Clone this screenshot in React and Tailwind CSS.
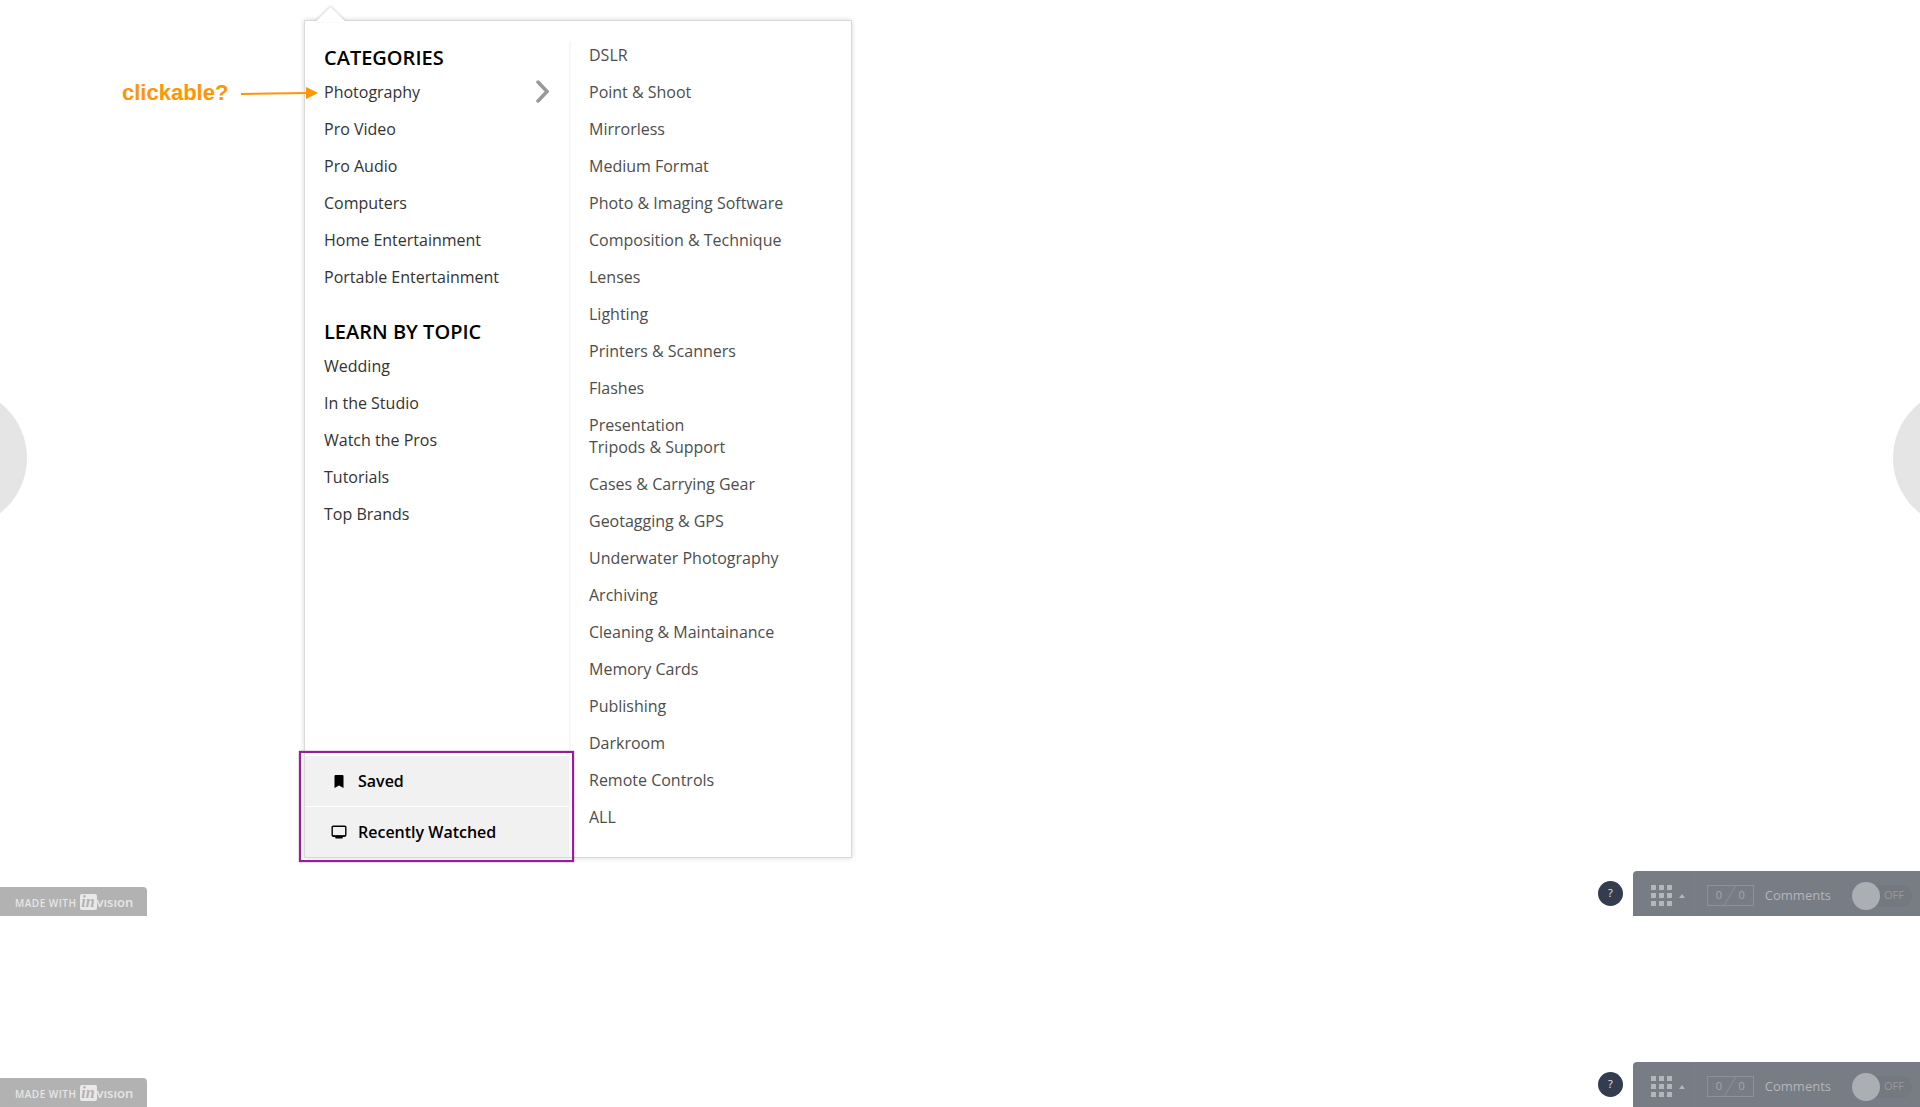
import { Fragment } from "react";

const categories = [
  "Photography",
  "Pro Video",
  "Pro Audio",
  "Computers",
  "Home Entertainment",
  "Portable Entertainment",
];

const topics = [
  "Wedding",
  "In the Studio",
  "Watch the Pros",
  "Tutorials",
  "Top Brands",
];

// Each entry is one group; names in the same group are stacked without a gap.
const subcategories = [
  ["DSLR"],
  ["Point & Shoot"],
  ["Mirrorless"],
  ["Medium Format"],
  ["Photo & Imaging Software"],
  ["Composition & Technique"],
  ["Lenses"],
  ["Lighting"],
  ["Printers & Scanners"],
  ["Flashes"],
  ["Presentation", "Tripods & Support"],
  ["Cases & Carrying Gear"],
  ["Geotagging & GPS"],
  ["Underwater Photography"],
  ["Archiving"],
  ["Cleaning & Maintainance"],
  ["Memory Cards"],
  ["Publishing"],
  ["Darkroom"],
  ["Remote Controls"],
  ["ALL"],
];

const GRID_STEPS = [0, 8, 16];

function BookmarkIcon() {
  return (
    <svg width="16" height="16" viewBox="0 0 16 16" aria-hidden="true">
      <path d="M3.5 3a1 1 0 0 1 1-1h7a1 1 0 0 1 1 1v12L8 12.6 3.5 15z" fill="#000" />
    </svg>
  );
}

function ScreenIcon() {
  return (
    <svg width="16" height="16" viewBox="0 0 16 16" aria-hidden="true">
      <rect x="1.2" y="2.2" width="13.6" height="9.8" rx="1" fill="none" stroke="#000" strokeWidth="1.4" />
      <path d="M1.5 11.4h13v.8l-1.500.8H12l-.6 1.600H4.600L4 13H3l-1.500-.8z" fill="#000" />
    </svg>
  );
}

function MenuGroup({ title, items, activeItem }) {
  return (
    <section className="flex flex-col gap-[9px]">
      <h2 className="text-xl leading-7 font-semibold text-black">{title}</h2>
      <ul className="flex flex-col gap-[15px]">
        {items.map((item) => (
          <li key={item} className="flex h-[22px] items-center justify-between">
            <a href="#" className="text-[#333]">
              {item}
            </a>
            {item === activeItem && (
              <svg width="14" height="24" viewBox="0 0 14 24" fill="none" aria-hidden="true">
                <path
                  d="M3 2 12 11.500 3 21"
                  stroke="#999"
                  strokeWidth="3.500"
                  strokeLinecap="round"
                />
              </svg>
            )}
          </li>
        ))}
      </ul>
    </section>
  );
}

function ClickableNote() {
  return (
    <div className="absolute top-14 -left-[183px] flex items-center gap-[13px]">
      <span className="font-['Liberation_Sans',Arial,sans-serif] text-[22px] leading-8 font-bold text-[#ff9500]">
        clickable?
      </span>
      <svg width="77" height="14" viewBox="0 0 77 14" aria-hidden="true">
        <path d="M0 8 66 7" stroke="#ff9500" strokeWidth="2" />
        <path d="M65 1 77 7 65 13z" fill="#ff9500" />
      </svg>
    </div>
  );
}

function CategoryMenu() {
  return (
    <nav
      aria-label="Categories"
      className="relative flex w-[548px] border border-[#d9d9d9] bg-white text-base leading-[22px] shadow-[0_0_5px_rgba(0,0,0,0.16)]"
    >
      {/* pointer towards the menu button */}
      <svg
        className="absolute -top-[17px] left-[8px] drop-shadow-[0_-1px_1px_rgba(0,0,0,0.18)]"
        width="36"
        height="18"
        viewBox="0 0 36 18"
        aria-hidden="true"
      >
        <path d="M2 18 17.500 3 33 18z" fill="#fff" />
      </svg>

      <div className="flex w-[264px] flex-col justify-between pt-[23px]">
        <div className="flex flex-col gap-[30px] pr-5 pl-[19px]">
          <MenuGroup title="CATEGORIES" items={categories} activeItem="Photography" />
          <MenuGroup title="LEARN BY TOPIC" items={topics} />
        </div>

        <div className="relative flex flex-col gap-px">
          <a href="#" className="flex h-[50px] items-center gap-[11px] bg-[#f1f1f1] pl-[26px] font-semibold text-black">
            <BookmarkIcon />
            Saved
          </a>
          <a href="#" className="flex h-[50px] items-center gap-[11px] bg-[#f1f1f1] pl-[26px] font-semibold text-black">
            <ScreenIcon />
            Recently Watched
          </a>
          <div className="pointer-events-none absolute -top-[5px] -right-[5px] -bottom-[5px] -left-[6px] border-2 border-[#951f95] shadow-[0_0_1px_#951f95]" />
        </div>
      </div>

      <div className="mt-5 w-[2px] bg-[#f7f7f7]" />

      <ul className="flex flex-1 flex-col gap-[15px] pt-[23px] pb-[29px] pl-[18px]">
        {subcategories.map((group) => (
          <li key={group[0]} className="flex flex-col items-start">
            {group.map((name) => (
              <a key={name} href="#" className="text-[#4d4d4d]">
                {name}
              </a>
            ))}
          </li>
        ))}
      </ul>

      <ClickableNote />
    </nav>
  );
}

function InVisionBadge() {
  return (
    <a
      href="#"
      className="flex h-[29px] items-center gap-[3px] rounded-tr bg-[#b2b2b2] pr-[14px] pl-[15px] text-[#e6e6e6]"
    >
      <span className="pt-[3px] text-[10px] font-semibold tracking-wider">MADE WITH</span>
      <span className="flex items-center pt-px">
        <span className="flex h-4 w-[17px] items-center justify-center rounded-[2px] bg-[#e9e9e9] pb-px font-['Liberation_Serif',serif] text-base leading-4 font-bold text-[#b2b2b2] italic">
          in
        </span>
        <span className="text-[13px] leading-4 font-semibold">vısıon</span>
      </span>
    </a>
  );
}

function CommentsBar({ id }) {
  return (
    <div className="flex gap-[10px]">
      <button
        type="button"
        aria-label="Help"
        className="mt-[10px] flex size-[25px] items-center justify-center rounded-full bg-[#343c4f] text-[11px] text-[#e8e9ec]"
      >
        ?
      </button>

      <div className="flex h-[45px] items-center rounded-tl bg-[#787c84] pr-2">
        <button
          type="button"
          aria-label="Screens"
          className="flex h-full items-center gap-[7px] border-r border-[#7b7f87] pt-[4px] pr-[9px] pl-[18px]"
        >
          <svg width="21" height="21" viewBox="0 0 21 21" fill="#b3b6bb" aria-hidden="true">
            {GRID_STEPS.map((y) => (
              <Fragment key={y}>
                {GRID_STEPS.map((x) => (
                  <rect key={x} x={x} y={y} width="5" height="5" />
                ))}
              </Fragment>
            ))}
          </svg>
          <svg width="6" height="4" viewBox="0 0 6 4" fill="#b3b6bb" aria-hidden="true">
            <path d="M0 4 3 0l3 4z" />
          </svg>
        </button>

        <div className="mt-1 ml-3 flex h-[21px] w-[47px] items-center justify-between border border-[#8d9199] px-2 text-[11px] text-[#a3a6ac]">
          <span>0</span>
          <svg width="12" height="19" viewBox="0 0 12 19" stroke="#8d9199" aria-hidden="true">
            <path d="M.5 19 11.500 0" />
          </svg>
          <span>0</span>
        </div>

        <label htmlFor={id} className="mt-1 ml-[11px] text-[13px] text-[#b3b6bb]">
          Comments
        </label>

        <button
          id={id}
          type="button"
          role="switch"
          aria-checked="false"
          className="mt-1 ml-[21px] flex h-[22px] w-[60px] items-center gap-1 rounded-full bg-[#74787f] text-[11px] text-[#969a9f]"
        >
          <span className="size-7 shrink-0 rounded-full bg-[#abaeb3]" />
          OFF
        </button>
      </div>
    </div>
  );
}

function Toolbar({ id }) {
  return (
    <footer className="flex items-end justify-between">
      <InVisionBadge />
      <CommentsBar id={id} />
    </footer>
  );
}

function App() {
  return (
    <div className="flex flex-col gap-[146px] bg-white font-['Open_Sans',sans-serif]">
      <div className="flex flex-col">
        <main className="flex">
          <div className="mt-[388px] flex h-[140px] w-[27px] justify-end overflow-hidden">
            <button type="button" aria-label="Previous screen" className="size-[140px] shrink-0 rounded-full bg-[#e5e5e5]" />
          </div>
          <div className="flex-1 pt-5 pb-[13px] pl-[277px]">
            <CategoryMenu />
          </div>
          <div className="mt-[388px] flex h-[140px] w-[27px] overflow-hidden">
            <button type="button" aria-label="Next screen" className="size-[140px] shrink-0 rounded-full bg-[#e5e5e5]" />
          </div>
        </main>
        <Toolbar id="comments-screen" />
      </div>
      <Toolbar id="comments-page" />
    </div>
  );
}

export default App;
